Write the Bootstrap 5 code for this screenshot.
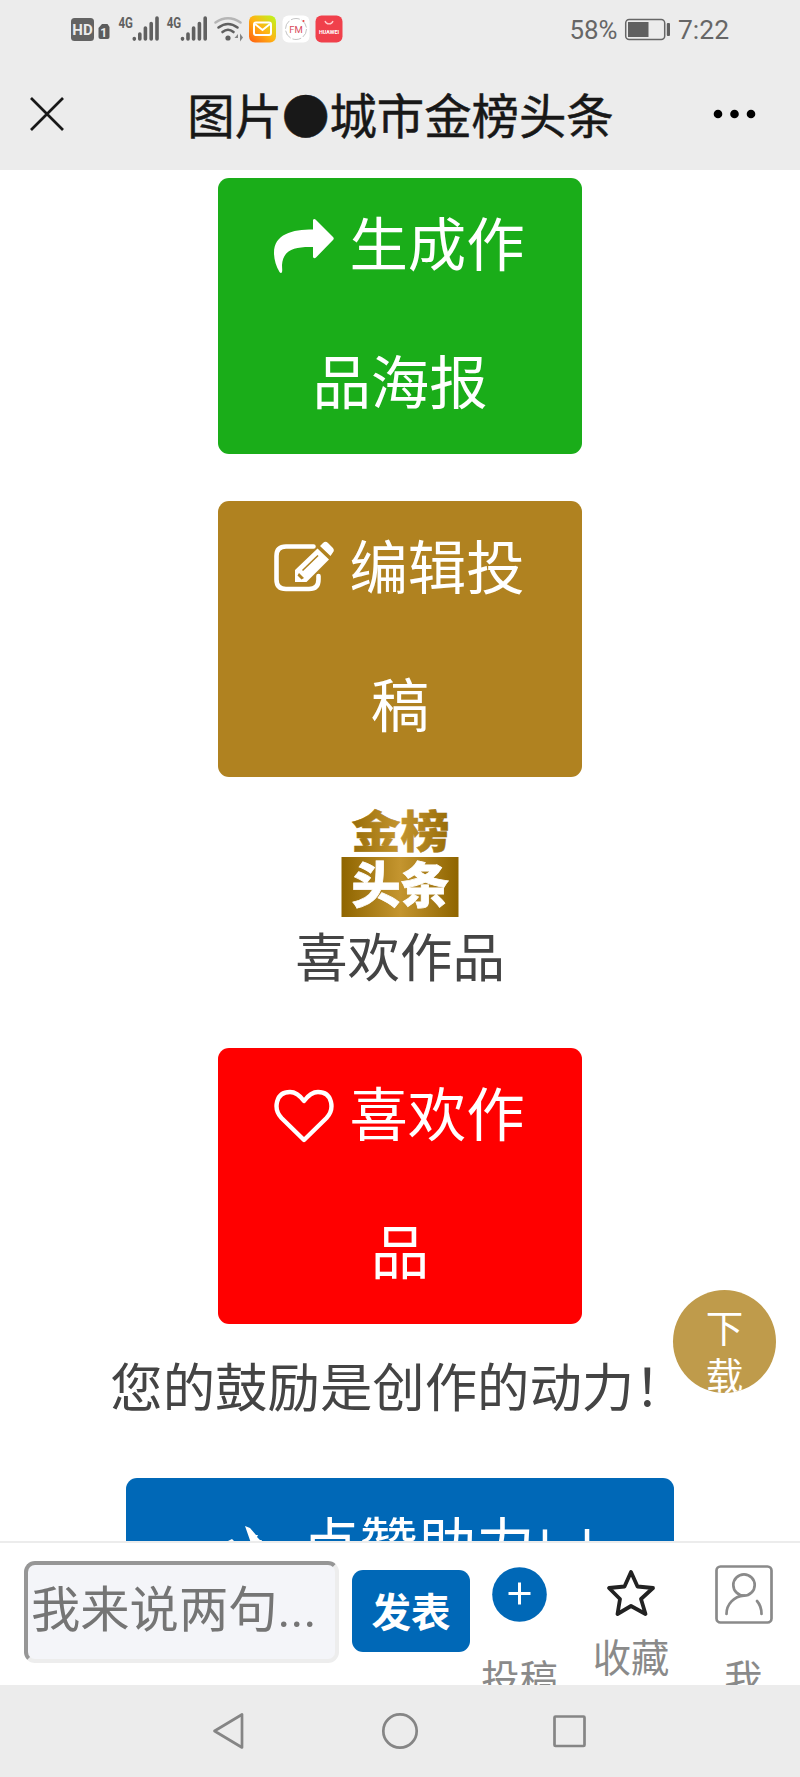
<!DOCTYPE html>
<html lang="zh-CN">
<head>
<meta charset="utf-8">
<meta name="viewport" content="width=device-width, initial-scale=1">
<title>图片●城市金榜头条</title>
<link href="https://cdn.jsdelivr.net/npm/bootstrap@5.3.0/dist/css/bootstrap.min.css" rel="stylesheet">
<style>
body{font-family:Roboto,"Noto Sans CJK SC",sans-serif;height:1777px;overflow:hidden;color:#444;background:#fff}
.chrome{background:#ececec}
.statusbar{height:60px;flex:none}
.titlebar{height:110px;flex:none;padding:0 44px 0 30px}
.page-title{font:47.4px/70px "Noto Sans CJK SC",sans-serif;color:#181818;-webkit-text-stroke:.5px #181818;margin:0 0 3px 24px}
.feed{padding-top:8px;min-height:0}
.act{width:364px;height:276px;border:0;border-radius:11px;color:#fff;font:58.4px/126px "Noto Sans CJK SC",sans-serif;padding:0;flex:none;display:flex;flex-direction:column;align-items:center}
.act:hover{color:#fff}
.act .line-row{display:flex;justify-content:center;align-items:flex-start;height:138px;white-space:nowrap}
.act svg{width:60px;height:60px;margin:37.5px 15px 0 -1px;flex:none}
.green{background:#1aad19}.gold{background:#b08220;margin-top:47px}.red{background:#f00;margin-top:55px}
.note{font:52.4px/78px "Noto Sans CJK SC",sans-serif;color:#444;margin:0;white-space:nowrap}
.boost{width:548px;height:276px;background:#0068b7;margin-top:54px}
.boost .line-row{padding-left:22px}
.boost .tail{margin:8px 0 0 2px}
.download{position:absolute;left:673px;top:1290px;width:103px;height:103px;background:#bf9b4b;color:#fff;font:37.5px/48px "Noto Sans CJK SC",sans-serif;padding-top:12px;overflow:hidden;text-align:center}
.composer{height:144px;border-top:2px solid #ececec;flex:none;overflow:hidden;padding-left:24px;background:#fff}
.say{width:315px;height:102px;margin-top:18px;border:4px solid;border-color:#969696 #ededed #ededed #969696;border-radius:11px;background:#f4f5f9;font:49.3px/80px Roboto,"Noto Sans CJK SC",sans-serif;padding:0 3px 5px;color:#757575;min-width:0}
.say::placeholder{color:#757575;opacity:1}
.send{width:118px;height:82px;margin:27px 0 0 13px;border:0;border-radius:11px;background:#0068b7!important;font:bold 39.5px/78px "Noto Sans CJK SC",sans-serif;padding:0 0 3px}
.tab{font:38.3px/56px "Noto Sans CJK SC",sans-serif;color:#8a8a8a;text-align:center;flex:none}
.tab svg{display:block;margin:0 auto}
.sysnav{height:92px;flex:none}
</style>
</head>
<body class="d-flex flex-column position-relative">
<header class="chrome flex-shrink-0">
  <div class="statusbar">
    <svg width="800" height="60" viewBox="0 0 800 60" font-family="Roboto,sans-serif">
      <defs><linearGradient id="mail" x1="0" y1="1" x2="1" y2="0"><stop offset="0" stop-color="#ff5b10"/><stop offset=".5" stop-color="#ffb414"/><stop offset="1" stop-color="#b8fa20"/></linearGradient></defs>
      <rect x="71" y="18" width="23" height="23" rx="3.5" fill="#636363"/>
      <text x="82.5" y="35" font-size="15" font-weight="700" fill="#ececec" text-anchor="middle">HD</text>
      <path d="M102 24h5.5l2 3v10a2 2 0 0 1-2 2h-7a2 2 0 0 1-2-2v-9z" fill="#5c5c5c"/>
      <text x="103.7" y="36.5" font-size="12" font-weight="700" fill="#ececec" text-anchor="middle">1</text>
      <g fill="#606060">
        <g id="sig"><text x="118.500" y="27.500" font-size="15" font-weight="700" textLength="14.5" lengthAdjust="spacingAndGlyphs">4G</text>
        <g stroke="#606060" stroke-width="3.6" stroke-linecap="round"><path d="M134.3 38.5v.6M139.8 34v5M145.4 28v11M151.2 23.5v15.5M157 18v21"/></g></g>
        <use href="#sig" x="48.2"/>
        <circle cx="228" cy="38" r="2.6"/>
      </g>
      <g fill="none" stroke-width="2.6" stroke-linecap="round"><path d="M215.5 22.5q12.5-8.5 25 0" stroke="#b5b5b5"/><path d="M218.5 27.5q9.5-7 19 0M222.500 32q5.500-4.500 11 0" stroke="#606060"/></g>
      <path d="M238 34l-3.500 4h3.500zM240 33.500v8l3-4z" fill="#858585"/>
      <rect x="249" y="15.500" width="27" height="27" rx="6" fill="url(#mail)"/>
      <rect x="254" y="22.500" width="17" height="12.500" rx="2" fill="none" stroke="#fff" stroke-width="2"/><path d="M255 24l7.500 6 7.500-6" fill="none" stroke="#fff" stroke-width="2"/>
      <rect x="282.500" y="15.500" width="27" height="27" rx="6" fill="#fff"/><circle cx="296" cy="29" r="10.500" fill="none" stroke="#aaa" stroke-dasharray="9 2" stroke-width=".7"/><circle cx="303.500" cy="21" r="1" fill="#e44"/>
      <text x="296" y="32.500" font-size="9.500" fill="#d84a5c" text-anchor="middle">FM</text>
      <rect x="315.500" y="15.500" width="27" height="27" rx="6" fill="#f0404b"/><path d="M325 21a4.200 4.200 0 0 0 8 0" fill="none" stroke="#ffc9cc" stroke-width="1.300"/>
      <text x="329" y="33.500" font-size="5.500" font-weight="700" fill="#fff" text-anchor="middle" textLength="20" lengthAdjust="spacingAndGlyphs">HUAWEI</text>
      <text x="569.500" y="39" font-size="26" fill="#666" textLength="48" lengthAdjust="spacingAndGlyphs">58%</text>
      <rect x="625.700" y="19.500" width="39" height="20" rx="3.500" fill="none" stroke="#666" stroke-width="1.500"/><rect x="628" y="22" width="20.500" height="15" fill="#606060"/><rect x="666.800" y="23" width="3.200" height="13" rx="1" fill="#606060"/>
      <text x="678" y="39" font-size="26" fill="#666" textLength="51" lengthAdjust="spacingAndGlyphs">7:22</text>
    </svg>
  </div>
  <div class="titlebar d-flex align-items-center justify-content-between">
    <svg width="34" height="34" viewBox="0 0 34 34" stroke="#181818" stroke-width="2.700" style="margin-bottom:2px"><path d="M1 1l32 32M33 1L1 33"/></svg>
    <h1 class="page-title">图片●城市金榜头条</h1>
    <svg width="43" height="10" viewBox="0 0 43 10" style="margin-bottom:2px"><circle cx="5" cy="5" r="4.300"/><circle cx="21.500" cy="5" r="4.300"/><circle cx="38" cy="5" r="4.300"/></svg>
  </div>
</header>

<main class="feed flex-grow-1 overflow-hidden d-flex flex-column align-items-center">
  <button class="btn act green"><span class="line-row"><svg viewBox="0 0 60 60" fill="#fff"><path d="M39 4.500c0-1.500 1.500-2 2.500-1L59 21c1 1 1 2 0 3L42 41.500c-1.500 1.500-3 .5-3-1V31C22 30.500 9 33 8 49c0 3 .5 5 0 7-.4 1.500-1.700 1.200-2.500 0C2 50.500 0 43 0 37 0 18 18 13.500 39 13.500z"/></svg>生成作</span><span class="line-row">品海报</span></button>
  <button class="btn act gold"><span class="line-row"><svg viewBox="0 0 60 60" fill="none" stroke="#fff"><path d="M39.500 7.500H12Q2.500 7.500 2.500 17v23.500Q2.500 50 12 50h23q9.500 0 9.500-9.500V37" stroke-width="4.600" stroke-linecap="round"/><path d="M21 43V31L43.500 9.500 55 20.500 32.500 43zM46 7l3-3q2.500-2.500 5 0l4.700 4.800q2.300 2.500 0 5L56.500 17z" fill="#fff" stroke="none"/><path d="M28.500 31.500L44 16.500" stroke="#b08220" stroke-width="1.600"/><path d="M25 34l5 5-2.500 1.500-4-4z" fill="#b08220" stroke="none"/></svg>编辑投</span><span class="line-row">稿</span></button>

  <svg class="flex-shrink-0" width="120" height="112" viewBox="340 807 120 112" style="margin-top:30px" font-family="Noto Sans CJK SC,sans-serif" font-weight="900" font-size="49">
    <defs><linearGradient id="gilt" x1="342" x2="458" y1="0" y2="0" gradientUnits="userSpaceOnUse"><stop offset="0" stop-color="#8f6500"/><stop offset=".5" stop-color="#c4952f"/><stop offset="1" stop-color="#8f6500"/></linearGradient></defs>
    <text transform="scale(1 .9)" x="351.500" y="942.500" fill="url(#gilt)" stroke="url(#gilt)" stroke-width=".6">金榜</text>
    <rect x="341.500" y="857" width="117" height="60" fill="url(#gilt)"/>
    <text x="351.500" y="903" fill="#fff" stroke="#fff" stroke-width=".8">头条</text>
  </svg>
  <p class="note" style="margin-top:-4px">喜欢作品</p>
  <button class="btn act red"><span class="line-row"><svg viewBox="0 0 60 60" fill="none" stroke="#fff" stroke-width="4.400" stroke-linejoin="round"><path d="M30 54L7.500 32C-1 23 1.500 6 16 6c7 0 11 5 14 9 3-4 7-9 14-9 14.500 0 17 17 8.500 26z"/></svg>喜欢作</span><span class="line-row">品</span></button>
  <p class="note" style="margin:21px 3px 1px 0">您的鼓励是创作的动力！</p>
  <button class="btn act boost"><span class="line-row"><svg viewBox="0 0 60 60" fill="#fff"><path d="M19 10l5 2 6 7 2 0-1 2 3 3 2 0-1 2 9 5 9 2q3 3-3 5l-14-1-6 17-5 0-1-18-12-2-6 6-3-1 1-10-2-4 4-2 5 5 15 2z"/></svg>点赞助力<span class="tail">凵</span></span></button>
</main>
<div class="download rounded-circle">下<br>载</div>

<footer class="flex-shrink-0">
  <div class="composer d-flex align-items-start">
    <input class="say" placeholder="我来说两句..." aria-label="评论">
    <button class="btn btn-primary send">发表</button>
    <div class="tab" style="width:99px;padding-top:24px">
      <svg width="55" height="55" viewBox="0 0 55 55"><circle cx="27.500" cy="27.500" r="27.300" fill="#0068b7"/><path d="M16.500 26.500h22M27.500 15.500v22" stroke="#fff" stroke-width="3"/></svg>
      <div style="margin-top:27px">投稿</div>
    </div>
    <div class="tab" style="width:124px;padding-top:26px">
      <svg width="50" height="48" viewBox="0 0 50 48"><path d="M25 3l6.500 14.500L47 19 35 30l4.500 15L25 37 11.500 45 14 30 3 19l15.500-1.500z" fill="none" stroke="#222" stroke-width="3.800" stroke-linejoin="round"/></svg>
      <div style="margin-top:11px">收藏</div>
    </div>
    <div class="tab" style="width:101px;padding-top:22px">
      <svg width="58" height="59" viewBox="0 0 58 59" fill="none" stroke="#8a8a8a" stroke-width="2.700" stroke-linecap="round"><rect x="1.500" y="1.500" width="55" height="56" rx="4"/><circle cx="29" cy="20" r="10.700"/><path d="M11.500 49C11.500 39 19 31.500 29 30.700M42 36q4.500 5 4.500 13"/></svg>
      <div style="margin-top:25px">我</div>
    </div>
  </div>
  <div class="sysnav chrome">
    <svg width="800" height="92" viewBox="0 1685 800 92" fill="none" stroke="#858585" stroke-width="2.700" stroke-linejoin="round"><path d="M214.500 1731L242 1714.500v33z"/><circle cx="400" cy="1731" r="16.700"/><rect x="554.500" y="1716.500" width="30" height="29.500" rx="1"/></svg>
  </div>
</footer>
<script src="https://cdn.jsdelivr.net/npm/bootstrap@5.3.0/dist/js/bootstrap.bundle.min.js"></script>
</body>
</html>
